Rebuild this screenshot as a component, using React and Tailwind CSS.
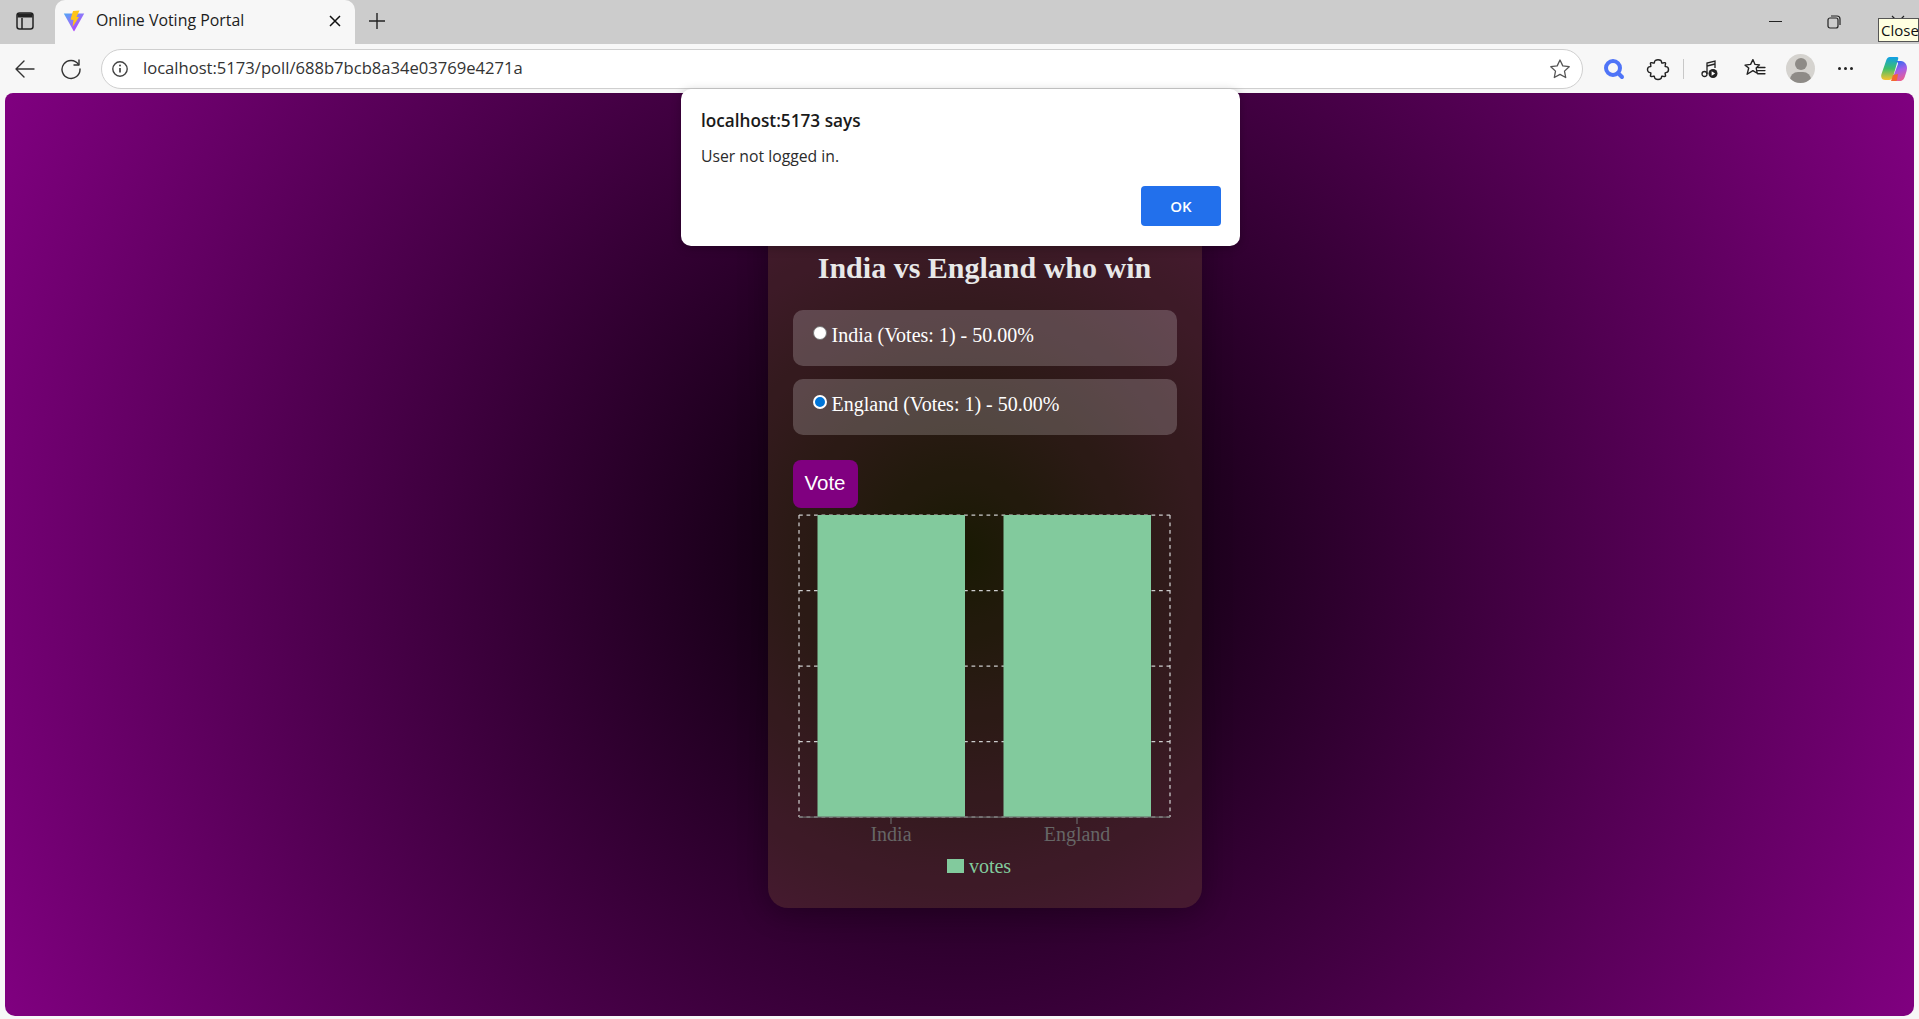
import React from "react";

const sans = "font-['Open_Sans','Noto_Sans',sans-serif]";

function TabBar() {
  return (
    <div className="flex h-[44px] bg-[#cccccc] relative">
      <div className="w-[55px] flex items-center justify-center pr-[6px] pb-[2px]">
        <svg width="20" height="20" viewBox="0 0 20 20" fill="none" stroke="#222" strokeWidth="1.5">
          <rect x="2" y="2" width="16" height="16" rx="2.5" />
          <path d="M2.500 4.500a2 2 0 0 1 2-2h11a2 2 0 0 1 2 2v2h-15z" fill="#222" stroke="none" />
          <path d="M7 7v11" />
        </svg>
      </div>
      <div className="w-[300px] h-[44px] bg-[#f7f7f7] rounded-t-[10px] flex items-center pl-[8px] pr-[14px] pb-[2px]">
        <svg width="22" height="22" viewBox="0 0 22 22">
          <defs>
            <linearGradient id="v1" x1="0" y1="0" x2="0.8" y2="1">
              <stop offset="0" stopColor="#4fa8f5" />
              <stop offset="0.45" stopColor="#8a7af8" />
              <stop offset="1" stopColor="#bd34fe" />
            </linearGradient>
          </defs>
          <path d="M0.800 3.500 L21.200 3.500 L11.400 21 Q11 21.600 10.600 21 Z" fill="url(#v1)" />
          <path d="M10 1 L16.500 0.500 L13.500 7 L16 7 L9.500 17 L10.500 10 L7.500 9.500 Z" fill="#ffc517" />
        </svg>
        <span className={`ml-[11px] text-[15.9px] text-[#1c1c1c] ${sans} flex-1 whitespace-nowrap`}>Online Voting Portal</span>
        <svg width="12" height="12" viewBox="0 0 12 12" stroke="#111" strokeWidth="1.5">
          <path d="M1 1l10 10M11 1L1 11" />
        </svg>
      </div>
      <div className="w-[44px] flex items-center justify-center pb-[2px]">
        <svg width="18" height="18" viewBox="0 0 18 18" stroke="#222" strokeWidth="1.4">
          <path d="M9 1v16M1 9h16" />
        </svg>
      </div>
      <div className="flex-1" />
      <div className="flex items-center pr-[14px]">
        <div className="w-[13px] h-[1.5px] bg-[#222] mr-[45px] mt-[-1px]" />
        <svg width="14" height="14" viewBox="0 0 14 14" fill="none" stroke="#222" strokeWidth="1.2" className="mr-[50px]">
          <rect x="1" y="3" width="10" height="10" rx="2" />
          <path d="M4 1h6a3 3 0 0 1 3 3v6" />
        </svg>
        <svg width="14" height="14" viewBox="0 0 14 14" stroke="#222" strokeWidth="1.2">
          <path d="M1 1l12 12M13 1L1 13" />
        </svg>
      </div>
      <div className="absolute left-[1878px] top-[18px] h-[24px] w-[41px] bg-[#ffffe1] border border-[#555] text-[15px] leading-[22px] pl-[2px] text-[#111] overflow-hidden whitespace-nowrap font-['Open_Sans',sans-serif]">
        Close
      </div>
    </div>
  );
}

function AddressBar() {
  return (
    <div className="h-[49px] bg-[#f7f7f7] flex items-center">
      <div className="w-[48px] flex justify-center ml-[1px]">
        <svg width="22" height="22" viewBox="0 0 22 22" fill="none" stroke="#333" strokeWidth="1.4" strokeLinecap="round" strokeLinejoin="round">
          <path d="M20 11H2M10 3l-8 8 8 8" />
        </svg>
      </div>
      <div className="w-[44px] flex justify-center">
        <svg width="22" height="22" viewBox="0 0 22 22" fill="none" stroke="#333" strokeWidth="1.4" strokeLinecap="round" strokeLinejoin="round">
          <path d="M18.500 6.500A9 9 0 1 0 20 11" />
          <path d="M19 2v5h-5" />
        </svg>
      </div>
      <div className="ml-[8px] h-[40px] w-[1482px] rounded-[20px] bg-white border border-[#cfcfcf] flex items-center pl-[9px] pr-[11px]">
        <svg width="18" height="18" viewBox="0 0 18 18" fill="none" stroke="#444" strokeWidth="1.4">
          <circle cx="9" cy="9" r="7.200" />
          <path d="M9 8v4.500" strokeWidth="1.700" />
          <circle cx="9" cy="5.600" r="1" fill="#444" stroke="none" />
        </svg>
        <span className={`ml-[14px] text-[16.6px] text-[#333] flex-1 ${sans}`}>
          localhost:5173/poll/688b7bcb8a34e03769e4271a
        </span>
        <svg width="22" height="22" viewBox="0 0 22 22" fill="none" stroke="#555" strokeWidth="1.3" strokeLinejoin="round">
          <path d="M11 2l2.800 5.900 6.400.8-4.700 4.400 1.200 6.400-5.700-3.100-5.700 3.100 1.200-6.400L1.800 8.700l6.400-.8z" />
        </svg>
      </div>
      <div className="flex items-center ml-[20px]">
        <svg width="22" height="22" viewBox="0 0 22 22" fill="none" className="mr-[21px]">
          <circle cx="10" cy="10" r="7" stroke="#4f74f7" strokeWidth="4" />
          <path d="M15 15l4 4" stroke="#4f74f7" strokeWidth="4" strokeLinecap="round" />
        </svg>
        <svg width="24" height="24" viewBox="0 0 20 20" fill="none" stroke="#222" strokeWidth="1.200" strokeLinejoin="round" className="mr-[13px]">
          <path d="M7 4.500C7 1.500 13 1.500 13 4.500C13 5 13.300 5.200 14 5L15.500 4.700C16 4.600 16.400 5 16.300 5.500L16 7C15.800 7.700 16 8 16.500 8C19.500 8 19.500 13 16.500 13C16 13 15.800 13.300 16 14L16.300 15.500C16.400 16 16 16.400 15.500 16.300L14 16C13.300 15.800 13 16 13 16.500C13 19.500 7 19.500 7 16.500C7 16 6.700 15.800 6 16L4.500 16.300C4 16.400 3.600 16 3.700 15.500L4 14C4.200 13.300 4 13 3.500 13C0.500 13 0.500 8 3.500 8C4 8 4.200 7.700 4 7L3.700 5.500C3.600 5 4 4.600 4.500 4.700L6 5C6.700 5.200 7 5 7 4.500Z" />
        </svg>
        <div className="w-px h-[20px] bg-[#c8c8c8] mr-[17px]" />
        <svg width="18" height="20" viewBox="0 0 18 20" fill="none" stroke="#222" strokeWidth="1.300" className="mr-[25px]">
          <circle cx="3.500" cy="15" r="2.500" />
          <path d="M6 15V4l8-2v7" />
          <path d="M6 7l8-2" />
          <circle cx="12" cy="14.500" r="4.500" fill="#222" stroke="none" />
          <path d="M10.600 12.200v4.600l3.600-2.300z" fill="#fff" stroke="none" />
        </svg>
        <svg width="22" height="21" viewBox="0 0 21 20" fill="none" stroke="#222" strokeWidth="1.300" strokeLinejoin="round" className="mr-[20px]">
          <path d="M8.500 1.500l2 4.600 4.300.4-3.200 3 1 5-4.100-2.500-5.500 3.500 1.500-6L1 6.800l5.300-.7z" />
          <path d="M13 9h7M13 12h7M13 15h7" strokeLinecap="round" />
        </svg>
        <div className="w-[29px] h-[29px] rounded-full bg-[#d5d3cf] relative overflow-hidden mr-[23px]">
          <div className="absolute left-[9px] top-[4px] w-[12px] h-[12px] rounded-full bg-[#8e8b87]" />
          <div className="absolute left-[4px] top-[18px] w-[21px] h-[16px] rounded-full bg-[#8e8b87]" />
        </div>
        <div className="flex gap-[3px] mr-[27px]">
          <div className="w-[3px] h-[3px] rounded-full bg-[#222]" />
          <div className="w-[3px] h-[3px] rounded-full bg-[#222]" />
          <div className="w-[3px] h-[3px] rounded-full bg-[#222]" />
        </div>
        <svg width="28" height="28" viewBox="0 0 28 28" fill="none">
          <defs>
            <linearGradient id="c1" x1="0.4" y1="0" x2="0.4" y2="1">
              <stop offset="0" stopColor="#0f9fe8" />
              <stop offset="0.5" stopColor="#3fbf6a" />
              <stop offset="1" stopColor="#f9c22e" />
            </linearGradient>
            <linearGradient id="c2" x1="0.4" y1="0" x2="0.7" y2="1">
              <stop offset="0" stopColor="#2f6cf0" />
              <stop offset="0.45" stopColor="#a45ee8" />
              <stop offset="1" stopColor="#f25f8a" />
            </linearGradient>
          </defs>
          <path d="M10 2h7c1.500 0 1.500 1 1 2.500L13 22c-.5 1.500-2 3-4 3H5c-3 0-4.500-3-3.500-6L6 6c.7-2.500 2-4 4-4z" fill="url(#c1)" />
          <path d="M14 6h7c3 0 6 3 6 7 0 2-1 5-2 8-.7 2.500-2 5-5 5h-6c-2 0-2-1-1.500-2.500L18 9c.3-1.500-1-3-4-3z" fill="url(#c2)" />
          <path d="M13 20l5-1-1 6c-.3 1-1 1-2 1h-4z" fill="#f4682f" />
        </svg>
      </div>
    </div>
  );
}

function Chart() {
  const L = 1, R = 372, T = 1, B = 303;
  const ys = [1, 76.5, 152, 227.5, 303];
  return (
    <svg width="380" height="335" viewBox="0 0 380 335" className="block ml-[5px] mt-[6px]">
      {ys.map((y) => (
        <line key={y} x1={L} x2={R} y1={y} y2={y} stroke="#ccc" strokeWidth="1.25" strokeDasharray="3.75 3.75" />
      ))}
      {[L, R].map((x) => (
        <line key={x} x1={x} x2={x} y1={T} y2={B} stroke="#ccc" strokeWidth="1.25" strokeDasharray="3.75 3.75" />
      ))}
      <rect x="19.500" y="1" width="147.500" height="302" fill="#82ca9d" />
      <rect x="205.500" y="1" width="147.500" height="302" fill="#82ca9d" />
      <line x1={L} x2={R} y1={B} y2={B} stroke="#666" strokeWidth="1.25" />
      <line x1="93" x2="93" y1={B} y2={B + 7} stroke="#666" strokeWidth="1.25" />
      <line x1="279" x2="279" y1={B} y2={B + 7} stroke="#666" strokeWidth="1.25" />
      <text x="93" y="327" textAnchor="middle" fill="#666" fontSize="20" fontFamily="'Liberation Serif', serif">India</text>
      <text x="279" y="327" textAnchor="middle" fill="#666" fontSize="20" fontFamily="'Liberation Serif', serif">England</text>
    </svg>
  );
}

function Option({ label, checked }) {
  return (
    <div className="h-[56px] rounded-[10px] bg-[rgba(255,255,255,0.2)] flex items-start pl-[19px] pt-[14px] text-[#fff] text-[20px] leading-[23px]">
      {checked ? (
        <span className="w-[14px] h-[14px] mt-[2px] mr-[5px] ml-[1px] rounded-full bg-[#0075d8] border-[2px] border-white shrink-0" />
      ) : (
        <span className="w-[14px] h-[14px] mt-[2px] mr-[5px] ml-[1px] rounded-full bg-white border border-[#767676] shrink-0" />
      )}
      <span>{label}</span>
    </div>
  );
}

function Page() {
  return (
    <div className="mx-[5px] h-[923px] rounded-t-[8px] rounded-b-[10px] overflow-hidden flex justify-center bg-[radial-gradient(circle,#000000_0%,#800080_100%)] font-['Liberation_Serif',serif]">
      <div className="w-[434px] h-[815px] ml-[50px] rounded-[20px] bg-[rgba(255,255,40,0.1)] shadow-[0_4px_30px_rgba(0,0,0,0.3)] px-[25px] relative">
        <h2 className="mt-[158px] text-center text-[30px] font-bold leading-[34px] text-[#e8e8e8]">India vs England who win</h2>
        <div className="flex flex-col gap-[13px] mt-[25px]">
          <Option label="India (Votes: 1) - 50.00%" />
          <Option label="England (Votes: 1) - 50.00%" checked />
        </div>
        <button className="mt-[25px] block w-[65px] h-[48px] pb-[1px] rounded-[8px] bg-[#800080] text-white text-[20.5px] font-['Liberation_Sans',sans-serif]">Vote</button>
        <Chart />
        <div className="flex items-center justify-center mt-[6px] pr-[11px] text-[20px] text-[#82ca9d] leading-[22px]">
          <span className="w-[17px] h-[14px] bg-[#82ca9d] mr-[5px]" />
          votes
        </div>
      </div>
    </div>
  );
}

function Dialog() {
  return (
    <div className={`absolute left-[681px] top-[89px] w-[559px] h-[157px] bg-white rounded-[10px] shadow-[0_2px_10px_rgba(0,0,0,0.25)] pl-[20px] pr-[19px] ${sans}`}>
      <div className="pt-[20px] text-[17.2px] font-semibold leading-[24px] text-[#1a1a1a]">localhost:5173 says</div>
      <div className="mt-[12px] text-[15.75px] leading-[22px] text-[#2b2b2b]">User not logged in.</div>
      <div className="flex justify-end mt-[19px]">
        <button className="w-[80px] h-[40px] rounded-[4px] bg-[#2270ec] text-white text-[15px] font-semibold">OK</button>
      </div>
    </div>
  );
}

export default function App() {
  return (
    <div className="w-[1919px] h-[1019px] bg-[#f7f7f7] relative overflow-hidden">
      <TabBar />
      <AddressBar />
      <Page />
      <Dialog />
    </div>
  );
}
